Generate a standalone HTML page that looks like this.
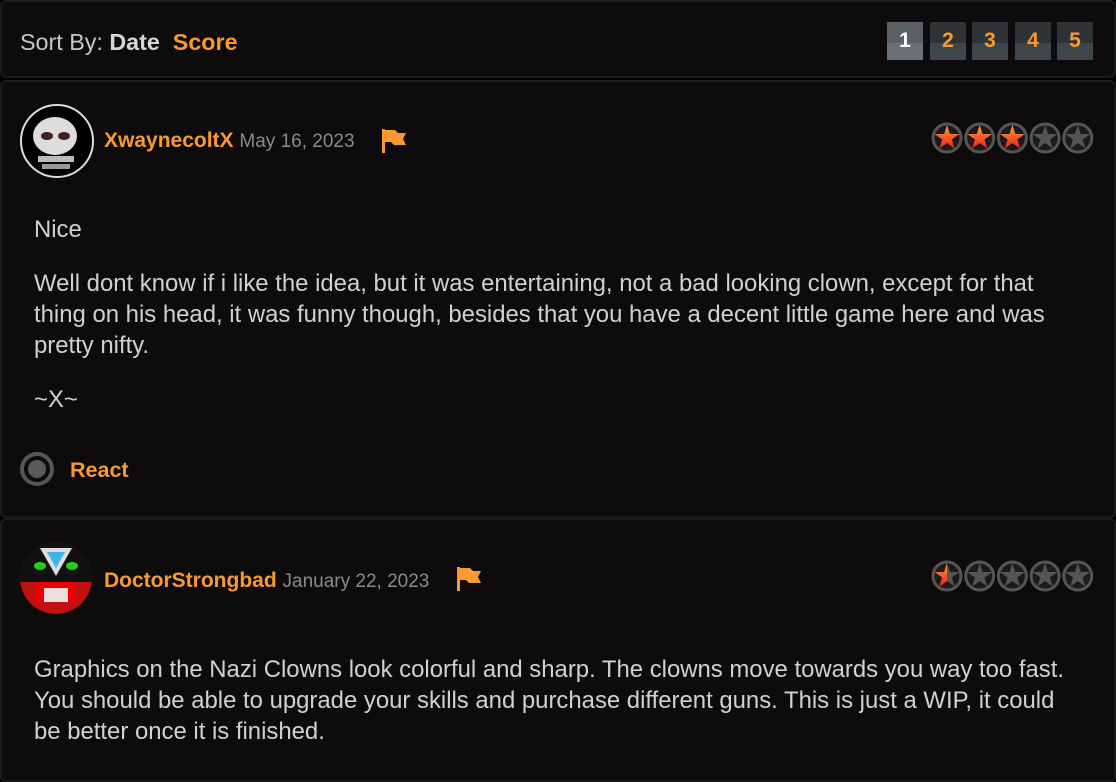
<!DOCTYPE html>
<html><head><style>
body{margin:0;width:1116px;height:772px;background:#000;overflow:hidden;font-family:"Liberation Sans",sans-serif;}
.p{position:absolute;left:0;width:1112px;background:#0e0b0d;border:2px solid #1c1a1c;border-radius:6px;}
.o{color:#f89a2f;font-weight:bold}
.pg{position:absolute;top:20px;width:36px;height:38px;background:linear-gradient(#2f3336 0 55%,#3f464b 55%);color:#f89a2f;font-weight:bold;font-size:21px;text-align:center;line-height:38px}
.av{position:absolute;left:18px;width:72px;height:72px;border-radius:50%;overflow:hidden}
.name{position:absolute;left:102px;font-size:21px}
.date{color:#8a8a8a;font-weight:normal;font-size:19px}
.txt{position:absolute;left:32px;color:#d2d0d2;font-size:23.9px;line-height:31px;width:1035px}
.txt p{margin:0 0 23px}
.stars{position:absolute;left:929px}
</style></head><body>
<div class="p" style="top:0;height:74px">
<div style="position:absolute;left:18px;top:27px;font-size:23.3px;color:#c8c6c8">Sort By: <b style="color:#d8d6d8">Date</b>&nbsp; <span class="o">Score</span></div>
<div class="pg" style="left:885px;background:linear-gradient(#5a6064 0 55%,#6a7075 55%);color:#fff">1</div>
<div class="pg" style="left:928px">2</div>
<div class="pg" style="left:970px">3</div>
<div class="pg" style="left:1013px">4</div>
<div class="pg" style="left:1055px">5</div>
</div>
<div class="p" style="top:80px;height:434px">
<div class="av" style="top:22px;background:#000;border:2px solid #ddd;width:70px;height:70px;">
<svg width="70" height="70"><ellipse cx="33" cy="30" rx="22" ry="19" fill="#ddd"/><ellipse cx="25" cy="30" rx="6" ry="4" fill="#402020"/><ellipse cx="42" cy="30" rx="6" ry="4" fill="#402020"/><rect x="16" y="50" width="36" height="6" fill="#bbb"/><rect x="20" y="58" width="28" height="5" fill="#999"/></svg></div>
<div class="name" style="top:47px"><span class="o">XwaynecoltX</span> <span class="date">May 16, 2023</span></div>
<svg style="position:absolute;left:378px;top:45px" width="30" height="28"><rect x="2" y="2" width="3" height="24" fill="#f89a2f"/><path d="M5 3h10l3 3h8l-3 6 3 6H14l-3-3H5z" fill="#f89a2f"/></svg>
<svg class="stars" style="top:40px" width="165" height="34" id="s1"></svg>
<div class="txt" style="top:132px"><p>Nice</p><p>Well dont know if i like the idea, but it was entertaining, not a bad looking clown, except for that thing on his head, it was funny though, besides that you have a decent little game here and was pretty nifty.</p><p>~X~</p></div>
<div style="position:absolute;left:18px;top:370px;width:34px;height:34px;border-radius:50%;border:4px solid #555;box-sizing:border-box"><div style="margin:4px;width:18px;height:18px;border-radius:50%;background:#5a5a5a"></div></div>
<div class="o" style="position:absolute;left:68px;top:376px;font-size:21.5px">React</div>
</div>
<div class="p" style="top:518px;height:260px">
<div class="av" style="top:22px;background:#c01010;">
<svg width="72" height="72"><rect x="0" y="0" width="72" height="40" fill="#111"/><path d="M20 6l16 28 16-28z" fill="#ddd"/><path d="M27 10h18l-9 16z" fill="#3bb8ea"/><ellipse cx="20" cy="24" rx="6" ry="4" fill="#2c2"/><ellipse cx="52" cy="24" rx="6" ry="4" fill="#2c2"/><rect x="16" y="40" width="40" height="20" fill="#e00"/><rect x="24" y="46" width="24" height="14" fill="#f0dede"/></svg></div>
<div class="name" style="top:49px"><span class="o">DoctorStrongbad</span> <span class="date">January 22, 2023</span></div>
<svg style="position:absolute;left:453px;top:45px" width="30" height="28"><rect x="2" y="2" width="3" height="24" fill="#f89a2f"/><path d="M5 3h10l3 3h8l-3 6 3 6H14l-3-3H5z" fill="#f89a2f"/></svg>
<svg class="stars" style="top:40px" width="165" height="34" id="s2"></svg>
<div class="txt" style="top:134px">Graphics on the Nazi Clowns look colorful and sharp. The clowns move towards you way too fast. You should be able to upgrade your skills and purchase different guns. This is just a WIP, it could be better once it is finished.</div>
</div>
<script>
function st(id,n){var s='<defs><linearGradient id="g'+id+'" x1="0" y1="0" x2="0" y2="1"><stop offset="0" stop-color="#ffa030"/><stop offset="1" stop-color="#f02020"/></linearGradient></defs>';
for(var i=0;i<5;i++){var cx=16+i*32.7,cy=16;s+='<circle cx="'+cx+'" cy="'+cy+'" r="14" fill="#1c1a1c" stroke="#555" stroke-width="3"/>';
var p='';for(var k=0;k<10;k++){var r=k%2?5:13,a=-Math.PI/2+k*Math.PI/5;p+=(cx+r*Math.cos(a)).toFixed(1)+','+(cy+r*Math.sin(a)).toFixed(1)+' ';}
var f=i<Math.floor(n)?'url(#g'+id+')':'#555';s+='<polygon points="'+p+'" fill="'+f+'"/>';
if(i==Math.floor(n)&&n%1){s+='<clipPath id="c'+id+'"><rect x="'+(cx-14)+'" y="0" width="14" height="34"/></clipPath><polygon clip-path="url(#c'+id+')" points="'+p+'" fill="url(#g'+id+')"/>';}}
document.getElementById(id).innerHTML=s;}
st('s1',3);st('s2',0.5);
</script>
</body></html>
